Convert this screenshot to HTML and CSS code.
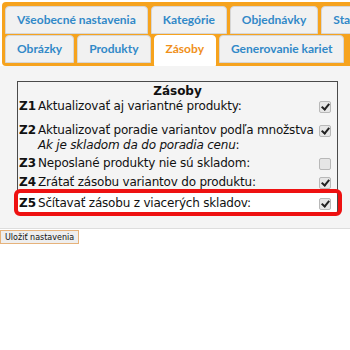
FILE: index.html
```html
<!DOCTYPE html>
<html>
<head>
<meta charset="utf-8">
<link rel="stylesheet" href="styles.css">
</head>
<body>
<div class="tabs">
  <div class="tabrow">
    <div class="tab">Všeobecné nastavenia</div>
    <div class="tab">Kategórie</div>
    <div class="tab">Objednávky</div>
    <div class="tab">Statistiky</div>
  </div>
  <div class="tabrow">
    <div class="tab">Obrázky</div>
    <div class="tab">Produkty</div>
    <div class="tab active">Zásoby</div>
    <div class="tab">Generovanie kariet</div>
  </div>
</div>
<div class="panel">
  <div class="box">
    <div class="head">Zásoby</div>
    <div class="row r1"><span class="z">Z1</span><span class="lbl">Aktualizovať aj variantné produkty:</span><span class="cb on"></span></div>
    <div class="row r2"><span class="z">Z2</span><span class="lbl">Aktualizovať poradie variantov podľa množstva<br><i>Ak je skladom da do poradia cenu</i>:</span><span class="cb on"></span></div>
    <div class="row r3"><span class="z">Z3</span><span class="lbl">Neposlané produkty nie sú skladom:</span><span class="cb"></span></div>
    <div class="row r4"><span class="z">Z4</span><span class="lbl">Zrátať zásobu variantov do produktu:</span><span class="cb on"></span></div>
    <div class="row hl"><span class="z">Z5</span><span class="lbl">Sčítavať zásobu z viacerých skladov:</span><span class="cb on"></span><span class="mark"></span></div>
  </div>
</div>
<button class="save">Uložiť nastavenia</button>
</body>
</html>
```
FILE: styles.css
```css
html, body { margin: 0; padding: 0; background: #fff; overflow: hidden; }
body { width: 350px; height: 350px; font-family: "DejaVu Sans", Verdana, sans-serif; }
.tabs {
  margin: 2px 0 0 2px;
  width: 420px;
  background: #f6a31e;
  border-radius: 4px;
  padding: 4px 0 3px 3px;
  display: flex;
  flex-direction: column;
  gap: 1px;
}
.tabrow { display: flex; gap: 3px; }
.tab {
  height: 26px;
  line-height: 26px;
  padding: 0 11px;
  background: #f1f1f1;
  border: 1px solid #d6d6d6;
  border-radius: 4px 4px 0 0;
  color: #3189c8;
  font-family: Lato, "DejaVu Sans", sans-serif;
  font-size: 12px;
  font-weight: bold;
  white-space: nowrap;
}
.tab.active { background: #fff; color: #f0901a; border-color: #fff; margin-bottom: -3px; height: 29px; }
.panel {
  background: #f4f4f4;
  border-bottom: 1px solid #dddddd;
  padding: 15px 7px 13px 17px;
}
.box {
  width: 319px;
  border: 1px solid #4a4a4a;
  border-bottom: none;
  font-size: 12px;
  color: #111;
}
.head { text-align: center; font-weight: bold; height: 16px; line-height: 16px; padding-top: 1px; }
.row { display: flex; align-items: flex-start; line-height: 15px; position: relative; white-space: nowrap; }
.r1 { padding: 0 0 9px; }
.r2 { padding: 0 0 2px; }
.r3 { padding: 1px 0 4px; }
.r4 { padding: 0 0 2px; }
.z { font-weight: bold; width: 19px; padding-left: 1px; flex: none; }
.lbl { flex: 1; letter-spacing: -0.2px; }
.cb {
  flex: none; width: 10px; height: 10px; margin: 2px 6px 0 0;
  border: 1px solid #b8b8b8; border-radius: 2px; background: #e6e6e6; position: relative;
}
.cb.on::after {
  content: ""; position: absolute; left: 3px; top: 0px; width: 3px; height: 6px;
  border: solid #222; border-width: 0 2px 2px 0; transform: rotate(40deg);
}
.row.hl { background: #fff; padding: 4px 0 4px; }
.mark {
  position: absolute; left: -4px; right: -5px; top: -3px; bottom: -1px;
  border: 4px solid #ee1111; border-radius: 6px;
}
.save {
  display: block;
  margin: 1px 0 0 0; padding: 0 4px; height: 14px;
  font-family: "DejaVu Sans", sans-serif; font-size: 8px; color: #111;
  background: #eeeeee; border: 1px solid #e6b27a; border-radius: 0;
}
```
